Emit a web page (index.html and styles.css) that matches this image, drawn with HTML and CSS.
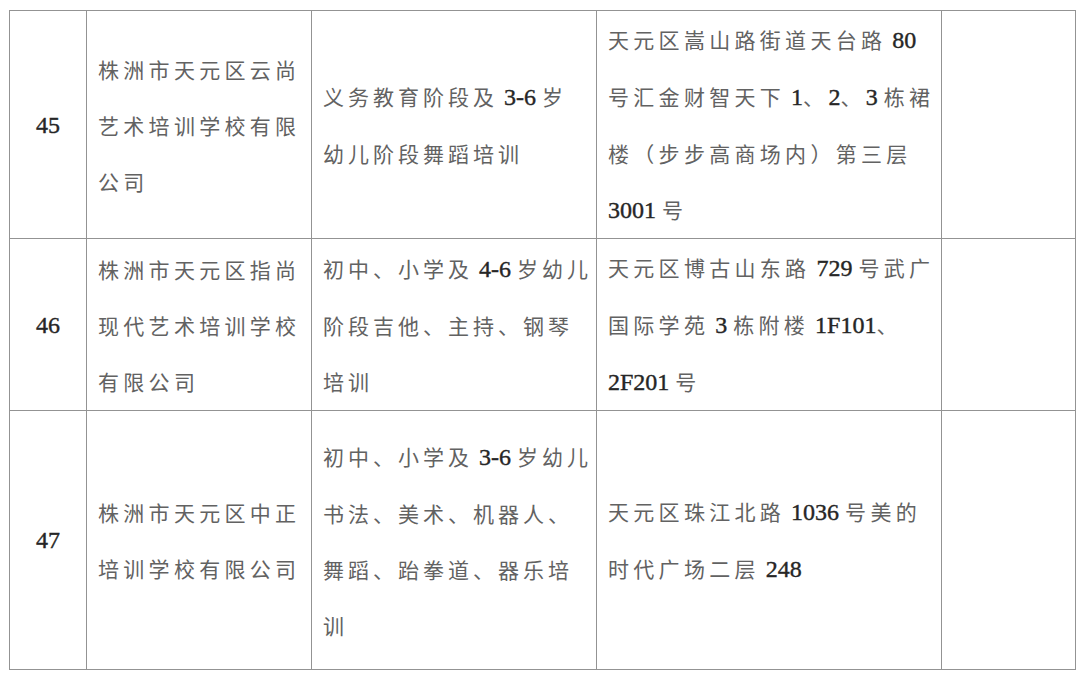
FILE: index.html
```html
<!DOCTYPE html>
<html lang="zh-CN">
<head>
<meta charset="utf-8">
<link rel="stylesheet" href="styles.css">
</head>
<body>
<table class="list">
  <colgroup>
    <col class="c-no"><col class="c-name"><col class="c-scope"><col class="c-addr"><col class="c-note">
  </colgroup>
  <tr class="r45">
    <td class="no">45</td>
    <td class="name">株洲市天元区云尚<br>艺术培训学校有限<br>公司</td>
    <td class="scope">义务教育阶段及<span class="num"> 3-6 </span>岁<br>幼儿阶段舞蹈培训</td>
    <td class="addr">天元区嵩山路街道天台路<span class="num"> 80</span><br>号汇金财智天下<span class="num"> 1</span>、<span class="num">2</span>、<span class="num">3 </span>栋裙<br>楼（步步高商场内）第三层<br><span class="num">3001 </span>号</td>
    <td></td>
  </tr>
  <tr class="r46">
    <td class="no">46</td>
    <td class="name">株洲市天元区指尚<br>现代艺术培训学校<br>有限公司</td>
    <td class="scope">初中、小学及<span class="num"> 4-6 </span>岁幼儿<br>阶段吉他、主持、钢琴<br>培训</td>
    <td class="addr">天元区博古山东路<span class="num"> 729 </span>号武广<br>国际学苑<span class="num"> 3 </span>栋附楼<span class="num"> 1F101</span>、<br><span class="num">2F201 </span>号</td>
    <td></td>
  </tr>
  <tr class="r47">
    <td class="no">47</td>
    <td class="name">株洲市天元区中正<br>培训学校有限公司</td>
    <td class="scope">初中、小学及<span class="num"> 3-6 </span>岁幼儿<br>书法、美术、机器人、<br>舞蹈、跆拳道、器乐培<br>训</td>
    <td class="addr">天元区珠江北路<span class="num"> 1036 </span>号美的<br>时代广场二层<span class="num"> 248</span></td>
    <td></td>
  </tr>
</table>
</body>
</html>
```

FILE: styles.css
```css
html, body {
  margin: 0;
  padding: 0;
  background: #ffffff;
}
body {
  padding: 10px 0 0 9px;
}
.list {
  border-collapse: collapse;
  table-layout: fixed;
  width: 1066px;
  font-family: "Noto Sans CJK SC", "Noto Sans", sans-serif;
  font-size: 21px;
  letter-spacing: 4.3px;
  color: #626262;
}
.c-no { width: 77px; }
.c-name { width: 225px; }
.c-scope { width: 285px; }
.c-addr { width: 345px; }
.c-note { width: 134px; }
.list td {
  border: 1.5px solid #939393;
  padding: 0 0 0 11px;
  vertical-align: middle;
  line-height: 56px;
  white-space: nowrap;
  overflow: hidden;
}
.list td.scope {
  letter-spacing: 4px;
}
.list td.no {
  padding: 0;
  text-align: center;
  font-family: "Liberation Serif", serif;
  font-size: 24px;
  letter-spacing: 0;
  color: #262626;
  -webkit-text-stroke: 0.4px #262626;
}
.num {
  font-family: "Liberation Serif", serif;
  font-size: 24px;
  letter-spacing: 0;
  color: #262626;
  -webkit-text-stroke: 0.4px #262626;
}
.r45 { height: 228px; }
.r46 { height: 171px; }
.r47 { height: 259px; }
```
